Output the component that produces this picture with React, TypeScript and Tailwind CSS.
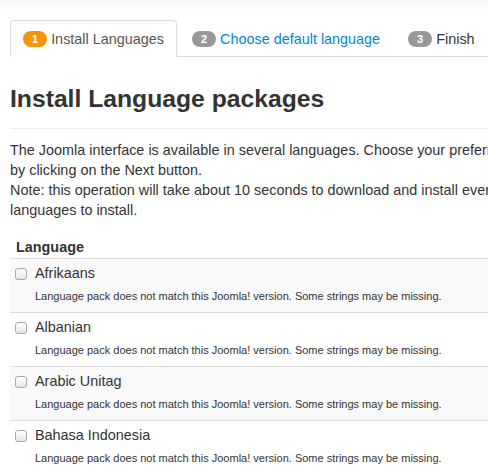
const languages = ["Afrikaans", "Albanian", "Arabic Unitag", "Bahasa Indonesia", "Bosnian"];

const steps = [
  { n: 1, label: "Install Languages", state: "active" },
  { n: 2, label: "Choose default language", state: "link" },
  { n: 3, label: "Finish", state: "disabled" },
];

function Badge({ n, active }: { n: number; active: boolean }) {
  return (
    <span
      className={
        "inline-flex h-4 items-center rounded-full px-[9px] text-[11px] font-bold leading-4 text-white " +
        (active ? "bg-[#f89406]" : "bg-[#999]")
      }
    >
      {n}
    </span>
  );
}

export default function App() {
  return (
    <div className="h-[472px] w-[488px] overflow-hidden bg-[linear-gradient(to_bottom,#f5f9fc,#fff_16px)] font-['Liberation_Sans',Arial,sans-serif] text-[#333]">
      <div className="w-[1000px] pl-[10px] pt-5">
        <ul className="flex border-b border-[#ddd]">
          {steps.map((s) => (
            <li key={s.n} className="-mb-px mr-[2px]">
              <div
                className={
                  "flex h-[37px] items-center gap-1 rounded-t-[4px] border px-3 text-[14.4px] leading-5 " +
                  (s.state === "active"
                    ? "border-[#ddd] border-b-white bg-white text-[#555]"
                    : s.state === "link"
                      ? "border-transparent text-[#0088cc]"
                      : "border-transparent text-[#333]")
                }
              >
                <Badge n={s.n} active={s.state === "active"} />
                <span>{s.label}</span>
              </div>
            </li>
          ))}
        </ul>

        <h2 className="mt-[27px] text-[24.7px] font-bold leading-[30px]">Install Language packages</h2>
        <hr className="mb-[11px] mt-[14px] border-t border-[#eee]" />

        <p className="whitespace-nowrap text-[14.4px] leading-[20px]">
          The Joomla interface is available in several languages. Choose your preferred languages by selecting the
          checkboxes and then install them
          <br />
          by clicking on the Next button.
          <br />
          Note: this operation will take about 10 seconds to download and install every language. To avoid timeouts
          please select no more than 3
          <br />
          languages to install.
        </p>

        <table className="mt-[9px] w-full border-collapse text-left">
          <thead>
            <tr>
              <th className="px-[6px] pb-px pt-2 text-[14.4px] font-bold leading-5">Language</th>
            </tr>
          </thead>
          <tbody>
            {languages.map((lang, i) => (
              <tr key={lang} className={i % 2 === 0 ? "bg-[#f9f9f9]" : ""}>
                <td className="border-t border-[#ddd] px-[5px] pb-[7px] pt-[5px]">
                  <label className="flex h-5 items-center gap-2 text-[14.4px]">
                    <span className="h-3 w-3 rounded-[3px] border border-[#aaa] bg-[linear-gradient(to_bottom,#fff,#e6e6e6)]" />
                    <span>{lang}</span>
                  </label>
                  <div className="mt-[3px] pl-5 text-[11px] leading-[18px]">
                    Language pack does not match this Joomla! version. Some strings may be missing.
                  </div>
                </td>
              </tr>
            ))}
          </tbody>
        </table>
      </div>
    </div>
  );
}
